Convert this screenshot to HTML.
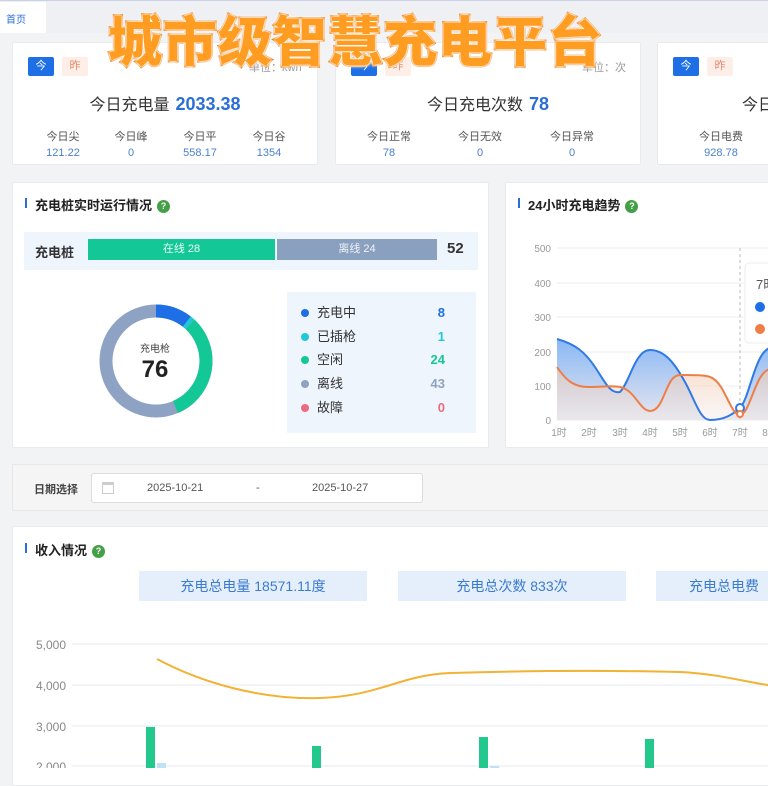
<!DOCTYPE html>
<html><head><meta charset="utf-8">
<style>
*{margin:0;padding:0;box-sizing:border-box}
body{width:768px;height:768px;overflow:hidden;background:#f2f3f5;font-family:"Liberation Sans","Noto Sans CJK SC",sans-serif;position:relative;color:#333}
.abs{position:absolute}
.card{position:absolute;background:#fff;border:1px solid #e8eaee;border-radius:2px}
.btn{position:absolute;width:26px;height:19px;font-size:11px;text-align:center;line-height:19px;border-radius:2px}
.b1{background:#1e6fe6;color:#fff}.b2{background:#fdeee8;color:#e88a6c}
.unit{position:absolute;font-size:11px;color:#999}
.big{position:absolute;width:100%;text-align:center;font-size:16px;color:#333}
.big b{color:#2b6fd6;font-size:18px;margin-left:6px}
.sub{position:absolute;font-size:11px;text-align:center;width:60px}
.sub span{display:block;color:#555}.sub i{display:block;font-style:normal;color:#4a80d0;margin-top:3px}
.ttl{position:absolute;font-size:13px;font-weight:bold;color:#222}
.ttl:before{content:"";position:absolute;left:-10px;top:3px;width:2px;height:10px;background:#2b6fd6}
.q{display:inline-block;width:13px;height:13px;border-radius:50%;background:#43a047;color:#fff;font-size:9px;text-align:center;line-height:13px;margin-left:5px;vertical-align:1px}
.leg{position:absolute;left:14px;font-size:13px;line-height:18px;color:#333;width:160px;height:18px}
.leg:before{content:"";position:absolute;left:0;top:5px;width:8px;height:8px;border-radius:50%;background:var(--c)}
.leg span{margin-left:16px}.leg b{position:absolute;right:16px;top:0;color:var(--c)}
.pill{position:absolute;top:571px;height:30px;background:#e5effc;color:#3b7bd0;font-size:14px;text-align:center;line-height:30px;width:228px}
.title{position:absolute;left:108px;top:-2px;font-size:54px;font-weight:900;color:#ff9c22;letter-spacing:1px;-webkit-text-stroke:3px #f27800;paint-order:stroke fill;text-shadow:0 0 2px #fff,0 0 3px #fff,0 0 4px #fff;white-space:nowrap;font-family:"Noto Sans CJK SC",sans-serif}
</style></head><body>
<div class="abs" style="left:0;top:0;width:768px;height:33px;background:#eef0f4;border-top:1px solid #c9d2e6"></div>
<div class="abs" style="left:0;top:2px;width:46px;height:31px;background:#fff;font-size:10px;color:#2b6fd6;padding:9px 0 0 6px">首页</div>

<div class="card" style="left:12px;top:42px;width:306px;height:123px">
<div class="btn b1" style="left:15px;top:14px">今</div><div class="btn b2" style="left:49px;top:14px">昨</div>
<div class="unit" style="left:236px;top:16px">单位：kwh</div>
<div class="big" style="top:48px">今日充电量<b>2033.38</b></div>
<div class="sub" style="left:20px;top:85px"><span>今日尖</span><i>121.22</i></div>
<div class="sub" style="left:88px;top:85px"><span>今日峰</span><i>0</i></div>
<div class="sub" style="left:157px;top:85px"><span>今日平</span><i>558.17</i></div>
<div class="sub" style="left:226px;top:85px"><span>今日谷</span><i>1354</i></div>
</div>
<div class="card" style="left:335px;top:42px;width:306px;height:123px">
<div class="btn b1" style="left:15px;top:14px">今</div><div class="btn b2" style="left:49px;top:14px">昨</div>
<div class="unit" style="left:246px;top:16px">单位：次</div>
<div class="big" style="top:48px">今日充电次数<b>78</b></div>
<div class="sub" style="left:23px;top:85px"><span>今日正常</span><i>78</i></div>
<div class="sub" style="left:114px;top:85px"><span>今日无效</span><i>0</i></div>
<div class="sub" style="left:206px;top:85px"><span>今日异常</span><i>0</i></div>
</div>
<div class="card" style="left:657px;top:42px;width:130px;height:123px">
<div class="btn b1" style="left:15px;top:14px">今</div><div class="btn b2" style="left:49px;top:14px">昨</div>
<div class="abs" style="left:84px;top:48px;font-size:16px;white-space:nowrap">今日</div>
<div class="sub" style="left:33px;top:85px"><span>今日电费</span><i>928.78</i></div>
</div>

<div class="title">城市级智慧充电平台</div>

<div class="card" style="left:12px;top:182px;width:477px;height:266px">
<div class="ttl" style="left:22px;top:12px">充电桩实时运行情况<span class="q">?</span></div>
<div class="abs" style="left:11px;top:49px;width:454px;height:38px;background:#eef5fd"></div>
<div class="abs" style="left:22px;top:59px;font-size:13px;font-weight:bold">充电桩</div>
<div class="abs" style="left:75px;top:56px;width:187px;height:21px;background:#14c796;color:#e8fff7;font-size:11px;text-align:center;line-height:21px">在线 28</div>
<div class="abs" style="left:264px;top:56px;width:160px;height:21px;background:#8aa0bf;color:#eef2f8;font-size:11px;text-align:center;line-height:21px">离线 24</div>
<div class="abs" style="left:434px;top:57px;font-size:15px;font-weight:bold">52</div>
<svg class="abs" style="left:86px;top:121px" width="114" height="114" viewBox="-57 -57 114 114">
<g fill="none" stroke-width="13">
<circle r="50" stroke="#8ea3c4"/>
<path d="M0 -50 A50 50 0 0 1 30.8 -39.4" stroke="#1e6fe6"/>
<path d="M30.8 -39.4 A50 50 0 0 1 34.1 -36.6" stroke="#22c8d8"/>
<path d="M34.1 -36.6 A50 50 0 0 1 19.5 46" stroke="#14c796"/>
</g></svg>
<div class="abs" style="left:112px;top:157px;width:60px;text-align:center;font-size:10px;color:#444">充电枪</div>
<div class="abs" style="left:112px;top:173px;width:60px;text-align:center;font-size:24px;font-weight:bold;color:#222">76</div>
<div class="abs" style="left:274px;top:109px;width:189px;height:141px;background:#eef5fd">
<div class="leg" style="top:12px;--c:#1e6fe6"><span>充电中</span><b>8</b></div>
<div class="leg" style="top:36px;--c:#22c8d8"><span>已插枪</span><b>1</b></div>
<div class="leg" style="top:59px;--c:#14c796"><span>空闲</span><b>24</b></div>
<div class="leg" style="top:83px;--c:#8ea3c4"><span>离线</span><b>43</b></div>
<div class="leg" style="top:107px;--c:#ec6a80"><span>故障</span><b>0</b></div>
</div>
</div>

<div class="card" style="left:505px;top:182px;width:280px;height:266px">
<div class="ttl" style="left:22px;top:12px">24小时充电趋势<span class="q">?</span></div>
</div>
<svg class="abs" style="left:505px;top:182px" width="263" height="266">
<defs><linearGradient id="gb" x1="0" y1="0" x2="0" y2="1"><stop offset="0" stop-color="#8ab8f5"/><stop offset="1" stop-color="#e6e6ee"/></linearGradient>
<linearGradient id="go" x1="0" y1="0" x2="0" y2="1"><stop offset="0" stop-color="#f7c9a8" stop-opacity=".6"/><stop offset="1" stop-color="#f0e8ea" stop-opacity=".4"/></linearGradient></defs>
<g stroke="#eceef2"><line x1="52" y1="66" x2="263" y2="66"/><line x1="52" y1="101" x2="263" y2="101"/><line x1="52" y1="135" x2="263" y2="135"/><line x1="52" y1="170" x2="263" y2="170"/><line x1="52" y1="204" x2="263" y2="204"/><line x1="52" y1="238" x2="263" y2="238"/></g>
<g font-size="10" fill="#999" text-anchor="end"><text x="46" y="70">500</text><text x="46" y="105">400</text><text x="46" y="139">300</text><text x="46" y="174">200</text><text x="46" y="208">100</text><text x="46" y="242">0</text></g>
<g font-size="10" fill="#999" text-anchor="middle"><text x="54" y="254">1时</text><text x="84" y="254">2时</text><text x="115" y="254">3时</text><text x="145" y="254">4时</text><text x="175" y="254">5时</text><text x="205" y="254">6时</text><text x="235" y="254">7时</text><text x="265" y="254">8时</text></g>
<path d="M52 157 C70 162 80 170 90 185 C100 200 105 212 115 210 C125 200 130 168 145 168 C160 168 170 182 180 200 C190 218 195 238 205 238 C220 238 228 232 235 226 C245 215 250 170 265 166 L265 238 L52 238Z" fill="url(#gb)"/>
<path d="M52 185 C62 200 70 205 84 205 C100 205 105 203 115 205 C130 208 135 229 145 229 C160 229 160 193 175 193 C190 193 200 193 205 195 C220 200 225 233 235 233 C245 233 250 190 265 187 L265 238 L52 238Z" fill="url(#go)"/>
<path d="M52 157 C70 162 80 170 90 185 C100 200 105 212 115 210 C125 200 130 168 145 168 C160 168 170 182 180 200 C190 218 195 238 205 238 C220 238 228 232 235 226 C245 215 250 170 265 166" fill="none" stroke="#2f7ae5" stroke-width="2"/>
<path d="M52 185 C62 200 70 205 84 205 C100 205 105 203 115 205 C130 208 135 229 145 229 C160 229 160 193 175 193 C190 193 200 193 205 195 C220 200 225 233 235 233 C245 233 250 190 265 187" fill="none" stroke="#ee7e46" stroke-width="2"/>
<line x1="235" y1="66" x2="235" y2="238" stroke="#bbb" stroke-dasharray="3 3"/>
<circle cx="235" cy="226" r="4" fill="#fff" stroke="#2f7ae5" stroke-width="2"/>
<circle cx="235" cy="232" r="3" fill="#fff" stroke="#ee7e46" stroke-width="2"/>
<rect x="240" y="81" width="40" height="80" rx="4" fill="#fff" stroke="#eee"/>
<text x="251" y="107" font-size="13" fill="#555">7时</text>
<circle cx="255" cy="125" r="5" fill="#1e6fe6"/><circle cx="255" cy="147" r="5" fill="#ee7e46"/>
</svg>

<div class="abs" style="left:12px;top:464px;width:770px;height:47px;background:#f5f5f6;border:1px solid #e8e8ea">
<div class="abs" style="left:21px;top:16px;font-size:11px;font-weight:bold;color:#444">日期选择</div>
<div class="abs" style="left:78px;top:8px;width:332px;height:30px;background:#fff;border:1px solid #ddd;border-radius:3px;font-size:11px;color:#555">
<div class="abs" style="left:10px;top:8px;width:12px;height:12px;border:1px solid #ccc;border-top:3px solid #ccc"></div>
<span class="abs" style="left:55px;top:8px">2025-10-21</span><span class="abs" style="left:164px;top:8px">-</span><span class="abs" style="left:220px;top:8px">2025-10-27</span></div>
</div>

<div class="card" style="left:12px;top:526px;width:770px;height:260px">
<div class="ttl" style="left:22px;top:13px">收入情况<span class="q">?</span></div>
</div>
<div class="pill" style="left:139px">充电总电量 18571.11度</div>
<div class="pill" style="left:398px">充电总次数 833次</div>
<div class="pill" style="left:656px;text-align:left;padding-left:33px">充电总电费</div>
<svg class="abs" style="left:0;top:630px" width="768" height="138">
<g stroke="#e6e9ef"><line x1="72" y1="14" x2="768" y2="14"/><line x1="72" y1="55" x2="768" y2="55"/><line x1="72" y1="96" x2="768" y2="96"/><line x1="72" y1="136" x2="768" y2="136"/></g>
<g font-size="12" fill="#888" text-anchor="end"><text x="66" y="19">5,000</text><text x="66" y="60">4,000</text><text x="66" y="101">3,000</text><text x="66" y="141">2,000</text></g>
<path d="M157 29 C200 52 260 70 320 68 C380 66 400 45 450 43 C520 41 600 40 680 42 C720 44 745 52 768 55" fill="none" stroke="#f2b233" stroke-width="2"/>
<g fill="#22c88c"><rect x="146" y="97" width="9" height="41"/><rect x="312" y="116" width="9" height="22"/><rect x="479" y="107" width="9" height="31"/><rect x="645" y="109" width="9" height="29"/></g>
<g fill="#bfe1f8"><rect x="157" y="133" width="9" height="5"/><rect x="490" y="136" width="9" height="2"/></g>
</svg>
</body></html>
